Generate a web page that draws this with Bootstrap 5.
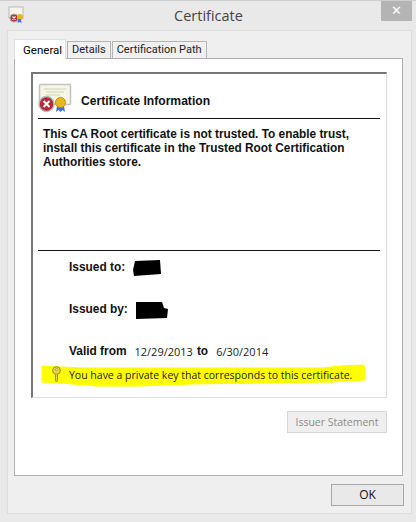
<!DOCTYPE html>
<html lang="en">
<head>
  <meta charset="UTF-8">
  <title>Certificate</title>
  <link href="https://cdn.jsdelivr.net/npm/bootstrap@5.3.0/dist/css/bootstrap.min.css" rel="stylesheet">
  <style>
    html, body { width: 416px; height: 522px; overflow: hidden; background: #e9e9e9; }
    body { font-family: "Liberation Sans", Arial, sans-serif; color: #111; border-top: 1px solid #cfcfcf; }
    .dlg-title { height: 29px; padding-left: 8px; }
    .dlg-title-text { font-family: "Open Sans", sans-serif; font-size: 14.5px; color: #444; flex: 1; text-align: center; padding-left: 8px; line-height: 30px; }
    .dlg-close { width: 31px; height: 20px; margin: 0 4px 0 0; background: #b4b4b4; color: #fff; font-size: 13px; line-height: 20px; text-align: center; align-self: flex-start; }
    .dlg-client { margin: 0 4px 0 7px; height: 484px; background: #efefef; border: 1px solid #dcdcdc; padding: 8px 8px 0 6px; }
    .dlg-tabs { border: 0; height: 19px; align-items: flex-end; flex-wrap: nowrap; }
    .dlg-tabs .nav-link { font-family: "Roboto", sans-serif; font-size: 11px; line-height: 16px; color: #222; background: #f0f0f0; border: 1px solid #b4b4b4; border-bottom: 0; border-radius: 0; padding: 0 4px 0; height: 17px; margin: 0 0 0 1px; white-space: nowrap; }
    .dlg-tabs .nav-link.active { height: 20px; background: #fff; width: 52px; margin: 0 0 -1px; padding: 2px 0 0 8px; position: relative; z-index: 2; font-size: 11.5px; }
    .dlg-panel { height: 418px; background: #fff; border: 1px solid #b0b0b0; padding: 13px 15px 0 16px; }
    .cert-box { height: 326px; border: 1px solid #dedede; border-top: 2px solid #777; border-left: 2px solid #777; padding: 0 6px 0 5px; }
    .cert-head { height: 45px; border-bottom: 1px solid #111; padding-top: 8px; }
    .cert-head svg { margin-top: -5px; }
    .cert-head-text { font-size: 12.1px; font-weight: 700; margin-left: 9px; padding-top: 3px; }
    .cert-msg { height: 132px; border-bottom: 1px solid #111; font-size: 11.85px; font-weight: 700; line-height: 14px; padding: 8px 0 0 5px; margin: 0; white-space: nowrap; }
    .cert-rows { padding-top: 8px; gap: 24px; }
    .cert-row { height: 18px; padding-left: 31px; font-size: 11.9px; }
    .cert-row b { font-weight: 700; }
    .cert-redact { margin-left: 8px; }
    .cert-redact-by { margin-left: 7px; }
    .cert-date { font-family: "Open Sans", sans-serif; font-size: 11px; color: #222; }
    .cert-key { position: relative; margin: 5px 16px 0 3px; height: 20px; width: 325px; padding-left: 11px; font-family: "Open Sans", sans-serif; font-size: 10.5px; color: #222; white-space: nowrap; }
    .cert-key-text { position: relative; }
    .cert-key-icon { position: relative; margin: -3px 8px 0 0; }
    .cert-key-mark { position: absolute; left: 0; top: -2px; }
    .cert-stmt { margin-top: 13px; }
    .btn.cert-btn-off { width: 100px; height: 22px; padding: 0; font-family: "Open Sans", sans-serif; font-size: 10.5px; line-height: 20px; border-radius: 0; border: 1px solid #d6d6d6; background: #efefef; color: #8c8c8c; opacity: 1; white-space: nowrap; }
    .dlg-foot { padding: 8px 0 0; margin-right: -1px; }
    .btn.dlg-ok { width: 73px; height: 22px; padding: 0; font-family: "Open Sans", sans-serif; font-size: 12px; line-height: 20px; border-radius: 0; border: 1px solid #a8a8a8; background: #e9e9e9; color: #111; }
  </style>
</head>
<body>
  <div class="dlg-title d-flex">
    <svg class="mt-1" width="20" height="20" viewBox="0 0 20 20">
      <rect x="1" y="2" width="14" height="11" fill="#f7f5ea" stroke="#b9b9b9"/>
      <circle cx="6" cy="13" r="4" fill="#b8323c" stroke="#aaa"/>
      <path d="M4.500 11.500l3 3m0-3l-3 3" stroke="#fff" stroke-width="1.200"/>
      <circle cx="12" cy="12" r="3" fill="#e3b52a"/>
      <path d="M10 14l-.5 4 2-1 2 1-.5-4z" fill="#4a74c9"/>
    </svg>
    <div class="dlg-title-text">Certificate</div>
    <div class="dlg-close">✕</div>
  </div>

  <div class="dlg-client">
    <ul class="nav nav-tabs dlg-tabs">
      <li class="nav-item"><a class="nav-link active" href="#">General</a></li>
      <li class="nav-item"><a class="nav-link" href="#">Details</a></li>
      <li class="nav-item"><a class="nav-link" href="#">Certification Path</a></li>
    </ul>

    <div class="dlg-panel">
      <div class="cert-box">
        <div class="cert-head d-flex align-items-center">
          <svg width="34" height="30" viewBox="0 0 34 30">
            <rect x="1.500" y="1.500" width="31" height="20" rx="1" fill="#f6f5e6" stroke="#c2c2c2" stroke-width="1.500"/>
            <path d="M6 6h22M8 9h18M8 12h14" stroke="#cfd6b8"/>
            <circle cx="8.500" cy="21" r="7.500" fill="#b22a38" stroke="#b9b9b9" stroke-width="1.500"/>
            <path d="M5.500 18l6 6m0-6l-6 6" stroke="#fff" stroke-width="2"/>
            <path d="M19 23l-1 6 2.500-2 2 2 2-2 2.500 2-1-6z" fill="#3f6fd6"/>
            <circle cx="22.500" cy="19.500" r="5" fill="#e8b820" stroke="#c58f14"/>
          </svg>
          <div class="cert-head-text">Certificate Information</div>
        </div>
        <p class="cert-msg">This CA Root certificate is not trusted. To enable trust,<br>install this certificate in the Trusted Root Certification<br>Authorities store.</p>
        <div class="cert-rows d-flex flex-column">
          <div class="cert-row d-flex align-items-center">
            <b>Issued to:</b>
            <svg class="cert-redact" width="28" height="16" viewBox="0 0 28 16"><path d="M2 1l25-1 1 14-27 2-1-6z" fill="#000"/></svg>
          </div>
          <div class="cert-row d-flex align-items-center">
            <b>Issued by:</b>
            <svg class="cert-redact-by" width="33" height="17" viewBox="0 0 33 17"><path d="M1 0l26 0 2 6 4 1-1 9-31 1z" fill="#000"/></svg>
          </div>
          <div class="cert-row d-flex align-items-center">
            <b class="me-2">Valid from</b><span class="cert-date me-1">12/29/2013</span><b class="me-2">to</b><span class="cert-date">6/30/2014</span>
          </div>
        </div>
        <div class="cert-key d-flex align-items-center">
          <svg class="cert-key-mark" width="325" height="23" viewBox="0 0 325 23">
            <path d="M1 2L40 4 280 4 300 2 322 1 324 3 324 16 290 18 220 19 150 20 100 22 55 22 20 19 1 18Z" fill="#ffff00" stroke="#ffff00" stroke-linejoin="round"/>
          </svg>
          <svg class="cert-key-icon" width="9" height="17" viewBox="0 0 9 17">
            <circle cx="4.500" cy="4.500" r="3.800" fill="#e6d44a" stroke="#9a8a2a" stroke-width="1.100"/>
            <circle cx="4.500" cy="3.500" r="1" fill="#fff8a0" stroke="#9a8a2a" stroke-width=".7"/>
            <path d="M3.500 8.500v6l1 1.500 1-1.500v-6" fill="#e6d44a" stroke="#9a8a2a"/>
          </svg>
          <span class="cert-key-text">You have a private key that corresponds to this certificate.</span>
        </div>
      </div>
      <div class="cert-stmt d-flex justify-content-end">
        <button class="btn cert-btn-off" disabled>Issuer Statement</button>
      </div>
    </div>

    <div class="dlg-foot d-flex justify-content-end">
      <button class="btn dlg-ok">OK</button>
    </div>
  </div>
  <script src="https://cdn.jsdelivr.net/npm/bootstrap@5.3.0/dist/js/bootstrap.bundle.min.js"></script>
</body>
</html>
